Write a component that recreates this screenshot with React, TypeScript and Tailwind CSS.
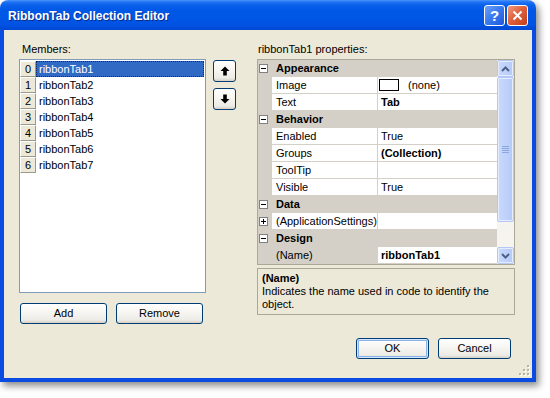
import React from "react";

const btn =
  "flex items-center justify-center rounded-[3px] border border-[#003C74] bg-[linear-gradient(180deg,#FFFFFF_0%,#F6F5F1_45%,#ECEBE6_85%,#D6D0C5_100%)] text-[11px] text-black";

function Minus() {
  return (
    <div className="relative w-[9px] h-[9px] border border-[#808080] bg-white">
      <div className="absolute left-[1px] top-[3px] w-[5px] h-[1px] bg-black" />
    </div>
  );
}
function Plus() {
  return (
    <div className="relative w-[9px] h-[9px] border border-[#808080] bg-white">
      <div className="absolute left-[1px] top-[3px] w-[5px] h-[1px] bg-black" />
      <div className="absolute left-[3px] top-[1px] w-[1px] h-[5px] bg-black" />
    </div>
  );
}

function Category({ label }: { label: string }) {
  return (
    <div className="h-[17px] flex items-center bg-[#D4D0C8]">
      <div className="ml-[1px]">
        <Minus />
      </div>
      <span className="ml-[8px] font-bold">{label}</span>
    </div>
  );
}

function Prop({
  name,
  value,
  bold,
  selected,
  plus,
  image,
}: {
  name: string;
  value?: string;
  bold?: boolean;
  selected?: boolean;
  plus?: boolean;
  image?: boolean;
}) {
  return (
    <div className="h-[17px] flex bg-[#D4D0C8]">
      <div className="w-[14px] flex items-center justify-start">
        {plus && (
          <div className="ml-[1px]">
            <Plus />
          </div>
        )}
      </div>
      <div
        className={`w-[105px] h-[16px] flex items-center pl-[4px] whitespace-nowrap ${
          selected ? "bg-[#D4D0C8]" : "bg-white"
        }`}
      >
        {name}
      </div>
      <div className="ml-[1px] flex-1 h-[16px] bg-white flex items-center pl-[3px] whitespace-nowrap">
        {image && <div className="w-[20px] h-[12px] border border-black bg-white ml-[-2px] mr-[9px]" />}
        <span className={bold ? "font-bold" : ""}>{value}</span>
      </div>
    </div>
  );
}

function ArrowUp() {
  return (
    <svg width="10" height="10" viewBox="0 0 10 10">
      <path d="M5 0.5 L9.5 5 L6.8 5 L6.8 9.5 L3.2 9.5 L3.2 5 L0.5 5 Z" fill="#000" />
    </svg>
  );
}
function ArrowDown() {
  return (
    <svg width="10" height="10" viewBox="0 0 10 10">
      <path d="M5 9.5 L9.5 5 L6.8 5 L6.8 0.5 L3.2 0.5 L3.2 5 L0.5 5 Z" fill="#000" />
    </svg>
  );
}

const sbBtn =
  "rounded-[2px] border border-[#B5C8F5] bg-[linear-gradient(90deg,#C9D9FC_0%,#BED1FB_60%,#B4C9F7_100%)] shadow-[inset_0_0_0_1px_#E4ECFD]";

export default function App() {
  const members = ["ribbonTab1", "ribbonTab2", "ribbonTab3", "ribbonTab4", "ribbonTab5", "ribbonTab6", "ribbonTab7"];
  return (
    <div
      className="w-[550px] h-[398px] bg-white overflow-hidden text-[11px] text-black"
      style={{ fontFamily: '"Liberation Sans", Arial, sans-serif' }}
    >
      <div className="relative w-[536px] h-[382px] flex flex-col rounded-t-[8px] shadow-[3px_4px_7px_rgba(0,0,0,0.45)]">
        {/* Title bar */}
        <div className="h-[30px] rounded-t-[8px] flex items-center pl-[8px] pr-[8px] bg-[linear-gradient(180deg,#4A95FA_0px,#2274F5_2px,#0B61EC_5px,#0058E6_10px,#0055E5_20px,#0052E2_25px,#0147D4_30px)]">
          <span className="text-white font-bold text-[12px] pt-[2px] [text-shadow:1px_1px_0_#0A2C8C]">
            RibbonTab Collection Editor
          </span>
          <div className="ml-auto flex gap-[2px] mt-[1px]">
            <div className="w-[21px] h-[21px] rounded-[3px] border border-white bg-[linear-gradient(135deg,#6FA1F9_0%,#3C7CF0_45%,#1D57DC_100%)] flex items-center justify-center text-white font-bold text-[15px] leading-none">
              ?
            </div>
            <div className="w-[21px] h-[21px] rounded-[3px] border border-white bg-[linear-gradient(135deg,#F09A7C_0%,#E0623C_45%,#C2401C_100%)] flex items-center justify-center">
              <svg width="11" height="11" viewBox="0 0 11 11">
                <path d="M1.5 1.5 L9.5 9.5 M9.5 1.5 L1.5 9.5" stroke="#fff" strokeWidth="2" />
              </svg>
            </div>
          </div>
        </div>
        {/* Body */}
        <div className="relative flex-1 border-x-4 border-b-4 border-[#0A4CE2] bg-[#ECE9D8] flex pt-[13px] pl-[15px]">
          {/* Left column */}
          <div className="w-[187px] flex flex-col">
            <div className="h-[16px] leading-[13px] pl-[3px]">Members:</div>
            <div className="h-[234px] border border-[#7F9DB9] bg-white pt-[1px]">
              {members.map((m, i) => (
                <div key={m} className="h-[16px] flex">
                  <div className="w-[16px] h-[16px] bg-[#ECE9D8] border-t border-l border-white border-b border-r border-b-[#9D9A8C] border-r-[#9D9A8C] flex items-center justify-center">
                    {i}
                  </div>
                  <div
                    className={`mr-[1px] flex-1 h-[16px] flex items-center pl-[3px] ${
                      i === 0 ? "bg-[#316AC5] text-white border border-dotted border-[#1B2A4A]" : ""
                    }`}
                  >
                    <span className={i === 0 ? "ml-[-1px]" : ""}>{m}</span>
                  </div>
                </div>
              ))}
            </div>
            <div className="mt-[10px] flex gap-[9px] pl-[1px]">
              <div className={`${btn} w-[87px] h-[21px]`}>Add</div>
              <div className={`${btn} w-[87px] h-[21px]`}>Remove</div>
            </div>
          </div>
          {/* Up/down */}
          <div className="ml-[7px] pt-[17px] flex flex-col gap-[6px]">
            <div className={`${btn} w-[23px] h-[22px]`}>
              <ArrowUp />
            </div>
            <div className={`${btn} w-[23px] h-[22px]`}>
              <ArrowDown />
            </div>
          </div>
          {/* Right column */}
          <div className="ml-[21px] w-[258px] flex flex-col">
            <div className="h-[16px] leading-[13px] pl-[1px]">ribbonTab1 properties:</div>
            <div className="h-[206px] border border-[#ACA899] flex bg-[#D4D0C8]">
              <div className="flex-1 flex flex-col">
                <Category label="Appearance" />
                <Prop name="Image" value="(none)" image />
                <Prop name="Text" value="Tab" bold />
                <Category label="Behavior" />
                <Prop name="Enabled" value="True" />
                <Prop name="Groups" value="(Collection)" bold />
                <Prop name="ToolTip" value="" />
                <Prop name="Visible" value="True" />
                <Category label="Data" />
                <Prop name="(ApplicationSettings)" value="" plus />
                <Category label="Design" />
                <Prop name="(Name)" value="ribbonTab1" bold selected />
              </div>
              <div className="w-[17px] flex flex-col bg-[#F5F4EF]">
                <div className={`${sbBtn} h-[17px] flex items-center justify-center`}>
                  <svg width="9" height="6" viewBox="0 0 9 6">
                    <path d="M1 5 L4.5 1.5 L8 5" stroke="#4D6185" strokeWidth="2" fill="none" />
                  </svg>
                </div>
                <div className={`${sbBtn} h-[145px] flex flex-col items-center justify-center gap-[1px]`}>
                  <div className="w-[7px] h-[1px] bg-[#8CA6E0]" />
                  <div className="w-[7px] h-[1px] bg-[#8CA6E0]" />
                  <div className="w-[7px] h-[1px] bg-[#8CA6E0]" />
                  <div className="w-[7px] h-[1px] bg-[#8CA6E0]" />
                </div>
                <div className="flex-1" />
                <div className={`${sbBtn} h-[17px] flex items-center justify-center`}>
                  <svg width="9" height="6" viewBox="0 0 9 6">
                    <path d="M1 1 L4.5 4.5 L8 1" stroke="#4D6185" strokeWidth="2" fill="none" />
                  </svg>
                </div>
              </div>
            </div>
            <div className="mt-[3px] h-[47px] border border-[#ACA899] pl-[4px] pt-[3px] leading-[13px]">
              <div className="font-bold">(Name)</div>
              <div>
                Indicates the name used in code to identify the
                <br />
                object.
              </div>
            </div>
            <div className="mt-[23px] flex justify-end gap-[9px] pr-[4px]">
              <div className={`${btn} w-[73px] h-[21px] shadow-[inset_0_0_0_1px_#CEE7FF,inset_0_0_0_2px_#8EB1EA]`}>OK</div>
              <div className={`${btn} w-[73px] h-[21px]`}>Cancel</div>
            </div>
          </div>
          {/* resize grip */}
          <svg className="absolute right-[1px] bottom-[1px]" width="12" height="12" viewBox="0 0 12 12">
            {[
              [8, 0],
              [4, 4],
              [8, 4],
              [0, 8],
              [4, 8],
              [8, 8],
            ].map(([x, y]) => (
              <g key={`${x}-${y}`}>
                <rect x={x + 1} y={y + 1} width="2" height="2" fill="#FFFFFF" />
                <rect x={x} y={y} width="2" height="2" fill="#B8B4A2" />
              </g>
            ))}
          </svg>
        </div>
      </div>
    </div>
  );
}
